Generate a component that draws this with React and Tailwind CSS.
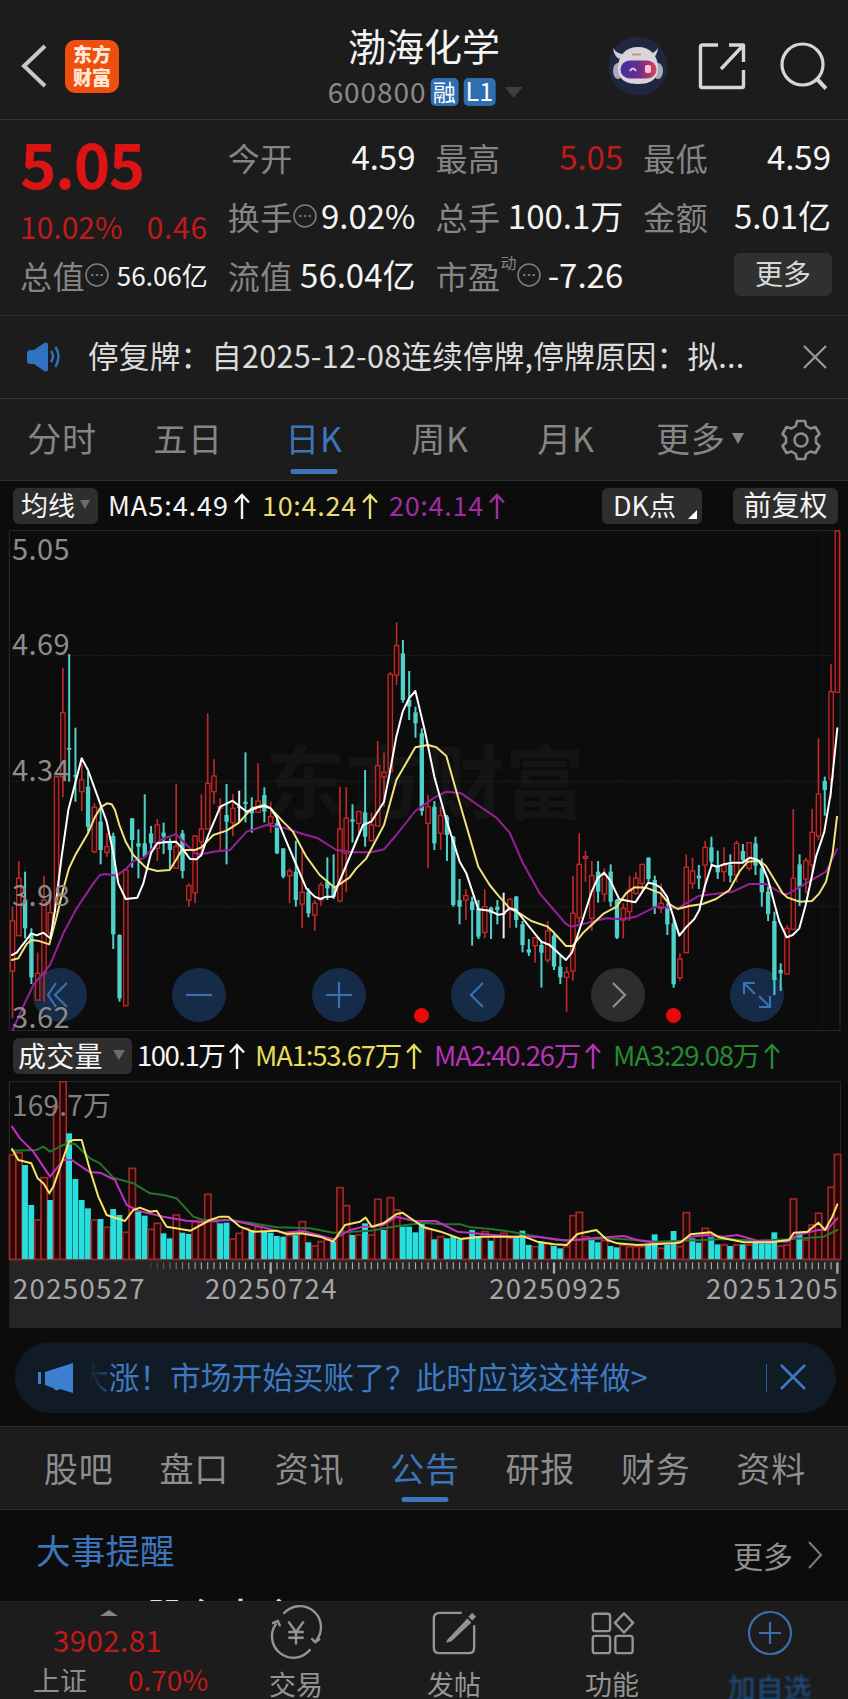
import React from 'react';

// [kind, high, bodyTop, bodyBottom, low], r = up, c = down, w = flat
const CANDLES = [
	['r', 1160, 1203, 1353, 1495], ['r', 1023, 1075, 1247, 1247], ['c', 1055, 1140, 1225, 1255], ['c', 1225, 1240, 1372, 1392],
	['r', 1298, 1360, 1440, 1440], ['r', 1067, 1140, 1360, 1445], ['r', 1125, 1178, 1240, 1250], ['r', 770, 770, 1175, 1175],
	['r', 443, 578, 770, 832], ['c', 402, 684, 689, 785], ['c', 623, 765, 770, 845], ['r', 730, 780, 815, 873],
	['c', 755, 800, 920, 935], ['r', 850, 862, 995, 1000], ['c', 865, 905, 990, 1033], ['r', 940, 980, 997, 1010],
	['c', 938, 948, 1243, 1287], ['c', 1243, 1245, 1435, 1445], ['r', 1050, 1050, 1457, 1457], ['c', 895, 895, 960, 1043],
	['c', 928, 970, 980, 1075], ['c', 823, 970, 1010, 1010], ['c', 918, 940, 970, 1005], ['r', 898, 915, 985, 1022],
	['c', 908, 938, 950, 1002], ['c', 955, 965, 990, 1048], ['r', 792, 980, 1045, 1045], ['c', 930, 940, 1053, 1075],
	['r', 1090, 1097, 1140, 1160], ['r', 945, 948, 1118, 1150], ['r', 823, 927, 965, 1010], ['r', 580, 790, 927, 927],
	['r', 718, 768, 815, 853], ['r', 835, 860, 865, 995], ['c', 792, 885, 905, 1033], ['r', 823, 865, 908, 948],
	['w', 812, 860, 863, 907], ['c', 697, 845, 852, 907], ['c', 832, 865, 880, 938], ['r', 730, 843, 877, 877],
	['c', 802, 825, 875, 907], ['r', 845, 890, 910, 938], ['c', 895, 910, 1000, 1002], ['c', 985, 985, 1070, 1075],
	['r', 1045, 1053, 1067, 1150], ['c', 962, 1055, 1140, 1160], ['r', 992, 1117, 1152, 1225], ['c', 1105, 1115, 1180, 1192],
	['r', 1140, 1150, 1185, 1233], ['r', 1087, 1095, 1140, 1158], ['c', 1012, 1085, 1105, 1140], ['c', 1003, 1100, 1130, 1137],
	['r', 800, 927, 1143, 1147], ['r', 802, 895, 1000, 1117], ['c', 853, 898, 905, 968], ['r', 873, 875, 910, 948],
	['c', 750, 877, 950, 980], ['r', 878, 915, 962, 962], ['r', 663, 737, 918, 918], ['r', 698, 757, 770, 860],
	['r', 455, 463, 755, 760], ['r', 307, 377, 465, 495], ['c', 360, 400, 540, 548], ['c', 453, 540, 560, 600],
	['c', 560, 577, 610, 653], ['c', 625, 640, 873, 887], ['r', 825, 860, 910, 1045], ['c', 843, 860, 970, 990],
	['r', 860, 887, 940, 990], ['c', 885, 890, 945, 1023], ['c', 948, 950, 1155, 1160], ['c', 1077, 1140, 1160, 1213],
	['r', 1108, 1127, 1140, 1200], ['c', 1130, 1145, 1170, 1277], ['c', 1140, 1165, 1250, 1257], ['r', 1108, 1160, 1237, 1255],
	['c', 1160, 1163, 1180, 1257], ['c', 1140, 1160, 1170, 1213], ['w', 1118, 1180, 1183, 1255], ['r', 1135, 1138, 1165, 1223],
	['c', 1128, 1130, 1200, 1223], ['c', 1203, 1213, 1275, 1297], ['c', 1257, 1288, 1298, 1308], ['r', 1253, 1253, 1277, 1328],
	['c', 1265, 1275, 1298, 1403], ['r', 1203, 1233, 1320, 1328], ['c', 1238, 1247, 1340, 1350], ['c', 1305, 1340, 1372, 1392],
	['r', 1340, 1357, 1372, 1475], ['r', 1067, 1180, 1353, 1382], ['r', 940, 1033, 1193, 1210], ['r', 993, 1010, 1015, 1085],
	['r', 1023, 1067, 1195, 1232], ['c', 1023, 1055, 1115, 1148], ['r', 1045, 1065, 1122, 1145], ['c', 1033, 1055, 1145, 1160],
	['c', 1137, 1140, 1253, 1257], ['r', 1150, 1165, 1200, 1255], ['r', 1067, 1110, 1175, 1202], ['r', 1057, 1075, 1120, 1125],
	['r', 1033, 1033, 1090, 1120], ['c', 1012, 1013, 1077, 1085], ['c', 1067, 1080, 1160, 1182], ['r', 1090, 1150, 1165, 1180],
	['c', 1150, 1163, 1213, 1245], ['c', 1190, 1210, 1393, 1403], ['r', 1300, 1317, 1373, 1382], ['r', 1003, 1042, 1298, 1298],
	['r', 1013, 1053, 1090, 1107], ['c', 1035, 1067, 1075, 1107], ['r', 962, 982, 1035, 1117], ['c', 950, 982, 1025, 1037],
	['c', 992, 1040, 1057, 1077], ['r', 982, 1037, 1055, 1085], ['c', 1003, 1035, 1067, 1087], ['r', 962, 970, 1065, 1087],
	['c', 972, 993, 1020, 1030], ['r', 967, 968, 1045, 1053], ['c', 950, 970, 1037, 1065], ['c', 1015, 1045, 1117, 1160],
	['c', 1100, 1115, 1182, 1203], ['c', 1175, 1203, 1380, 1425], ['c', 1330, 1350, 1360, 1413], ['r', 1215, 1225, 1362, 1362],
	['r', 867, 1075, 1228, 1230], ['c', 1003, 1033, 1100, 1158], ['r', 1013, 1022, 1077, 1120], ['r', 867, 937, 1035, 1075],
	['r', 655, 822, 948, 960], ['c', 770, 783, 810, 887], ['r', 433, 515, 777, 833], ['r', 33, 33, 517, 517],
];

// kind + top of the bar
const VOLUMES = 'r375 r368 c405 c525 r570 r443 c510 r230 r155 c310 c447 c510 c535 r570 c567 r592 c537 c555 r607 r415 c545 c557 r598 r580 c610 c625 r555 c608 c612 r575 r577 r493 r575 c580 c578 r627 r610 r595 c600 r590 c605 c608 c618 c620 r617 c615 r575 c637 r648 r635 r630 c635 r473 r527 c615 r615 c580 r615 r508 c600 r503 r540 c590 c590 c607 c575 r598 c628 r620 c625 c618 c628 r625 c600 c618 r605 c632 r620 r610 r625 c620 c602 c645 r650 c635 r640 c648 c655 r650 r557 r547 r620 c630 c637 r632 c648 c652 r645 r650 r650 r650 c645 c613 r655 c645 c603 r650 r548 c625 c638 r595 c622 c643 r645 c648 r645 c643 r645 c638 c640 c640 c607 r648 r645 r507 c610 r630 r585 r550 r600 r472 r373'
	.split(' ').map((s) => [s[0], Number(s.slice(1))]);

const MA5 = '36,1305 50,1298 94,1240 110,1246 130,1238 151,1255 165,1170 185,1010 205,870 245,715 264,750 320,905 340,1000 355,1090 377,1137 412,1133 430,1090 453,1000 472,970 491,967 528,965 547,985 570,1017 590,1018 604,1005 623,950 661,860 698,842 717,857 740,875 774,862 793,858 812,865 830,892 849,940 889,1035 919,1105 944,1130 961,1137 979,1130 1001,1130 1014,1095 1089,915 1114,905 1152,845 1169,760 1189,650 1208,575 1227,535 1246,513 1274,630 1303,770 1339,900 1379,1025 1399,1060 1435,1168 1469,1172 1494,1184 1509,1182 1529,1165 1548,1170 1586,1218 1624,1265 1649,1275 1698,1320 1716,1297 1738,1230 1775,1115 1793,1075 1812,1058 1831,1082 1858,1138 1906,1147 1945,1088 1963,1092 1982,1103 2001,1130 2038,1247 2058,1222 2083,1197 2098,1170 2114,1100 2135,1035 2152,1040 2171,1033 2198,1028 2228,1028 2250,1013 2273,1020 2288,1040 2303,1075 2338,1205 2360,1252 2378,1245 2398,1225 2417,1155 2448,1010 2473,935 2492,820 2512,625';
const MA10 = '36,1320 55,1315 80,1272 94,1260 113,1262 148,1273 170,1190 189,1110 207,1045 226,1005 264,940 283,895 302,862 321,850 335,853 345,870 358,915 377,965 400,1005 440,1045 472,1053 509,1050 528,1020 545,990 585,990 604,982 640,945 680,932 717,908 755,865 793,855 812,865 849,905 879,935 919,1010 959,1065 1004,1103 1049,1072 1069,1045 1099,1015 1152,915 1189,780 1246,682 1284,675 1309,682 1339,708 1378,845 1435,1040 1469,1095 1492,1123 1529,1165 1559,1180 1594,1203 1643,1220 1661,1237 1698,1278 1718,1278 1748,1240 1812,1180 1850,1160 1878,1120 1903,1102 1938,1103 1982,1120 2008,1152 2033,1167 2068,1158 2108,1152 2148,1137 2188,1110 2218,1055 2243,1025 2278,1022 2298,1038 2348,1120 2363,1133 2398,1145 2436,1143 2458,1120 2478,1085 2498,1000 2511,890';
const MA20 = '37,1533 60,1480 100,1395 150,1335 190,1240 230,1165 280,1090 300,1065 315,1062 350,1067 380,1045 400,1022 430,1015 480,960 528,942 560,975 585,1000 604,1003 640,995 690,990 740,935 800,915 849,923 909,942 954,955 1009,990 1059,997 1114,997 1152,988 1189,945 1246,873 1303,833 1339,815 1384,820 1429,852 1489,893 1529,938 1569,1030 1619,1120 1649,1155 1698,1212 1713,1220 1758,1210 1818,1195 1868,1198 1908,1190 1968,1160 2033,1165 2098,1127 2198,1115 2248,1092 2298,1092 2348,1122 2363,1122 2418,1090 2478,1055 2511,988';

const VMA1 = '36,357 55,390 94,400 113,445 132,462 148,490 160,470 207,335 220,330 245,330 270,420 295,500 320,555 375,573 400,540 420,533 450,545 470,542 500,590 572,602 630,570 660,560 685,560 720,590 760,605 830,602 860,612 905,610 960,620 1000,635 1035,585 1080,575 1097,563 1115,590 1150,580 1190,552 1207,548 1235,567 1272,592 1322,605 1382,627 1442,620 1512,620 1572,620 1612,635 1662,643 1700,645 1732,612 1789,600 1822,630 1852,640 1912,645 2022,640 2042,637 2072,613 2132,607 2157,622 2232,637 2312,637 2367,630 2382,608 2422,605 2455,578 2475,600 2497,560 2512,523';
const VMA2 = '36,290 60,325 100,365 150,440 190,390 215,390 270,427 300,428 345,450 380,525 415,542 490,560 560,572 610,575 690,570 750,583 800,595 850,608 910,603 1000,628 1050,600 1090,590 1115,590 1150,585 1190,560 1240,572 1307,573 1372,605 1422,610 1532,620 1612,620 1702,632 1772,625 1872,618 1912,630 1972,640 2032,640 2072,620 2122,615 2172,620 2212,615 2272,632 2362,635 2392,615 2455,600 2482,598 2512,565';
const VMA3 = '36,362 110,360 130,350 150,365 200,340 225,342 270,385 300,400 340,443 400,460 450,490 490,495 530,505 580,560 610,570 690,570 760,580 830,592 930,595 1000,608 1110,602 1180,590 1272,578 1322,583 1382,583 1412,592 1472,597 1532,605 1602,618 1672,630 1732,630 1832,625 1972,635 2052,632 2172,627 2272,632 2362,628 2472,620 2512,600';

const xOf = (i) => 37.5 + i * 18.89;

const Line = ({ points, color, w = 6 }) => (
	<polyline points={points} fill="none" stroke={color} strokeWidth={w} strokeLinejoin="round" strokeLinecap="round" />
);

const Dots = () => (
	<svg viewBox="0 0 24 24" className="w-6 h-6 shrink-0" fill="none" stroke="#7b7b7b" strokeWidth="1.6">
		<circle cx="12" cy="12" r="11" />
		<path d="M6.200 12h2.200M10.900 12h2.200M15.600 12h2.200" strokeWidth="2.200" />
	</svg>
);

const Header = () => (
	<header className="h-[120px] border-b border-[#333] flex items-center relative shrink-0">
		<svg viewBox="0 0 26 44" className="w-[26px] h-[44px] ml-[21px] mt-[13px]" fill="none" stroke="#c8c8c8" strokeWidth="4">
			<path d="M24 2 3 22l21 20" />
		</svg>
		<div className="ml-[18px] mt-[13px] w-[54px] h-[53px] rounded-[10px] bg-[#ee4f0e] text-[#ffe9d6] font-black text-[19px] leading-[23px] flex flex-col items-center justify-center pb-[2px]">
			<span>东方</span>
			<span>财富</span>
		</div>
		<div className="absolute left-1/2 -translate-x-1/2 top-[25px] flex flex-col items-center">
			<div className="text-[38px] leading-[40px] text-[#f4f4f4]">渤海化学</div>
			<div className="flex items-center mt-[13px] h-7 ml-[2px]">
				<span className="text-[28px] leading-7 tracking-[0.900px] text-[#8a8a8a] -mt-[3px]">600800</span>
				<span className="ml-[4px] w-7 h-7 rounded-[5px] bg-[#2f6eb0] text-white text-[23px] leading-[26px] text-center">融</span>
				<span className="ml-[5px] w-8 h-7 rounded-[5px] bg-[#2f6eb0] text-white text-[25px] leading-[25px] text-center">L1</span>
				<span className="ml-[9px] w-0 h-0 border-x-[9px] border-x-transparent border-t-[11px] border-t-[#3f3f3f]" />
			</div>
		</div>
		<div className="ml-auto mt-[13px] flex items-center">
			<svg viewBox="0 0 60 60" className="w-[60px] h-[60px]">
				<defs>
					<linearGradient id="visor" x1="0" x2="1">
						<stop offset="0" stopColor="#3f2f9c" />
						<stop offset=".5" stopColor="#6a2c8c" />
						<stop offset="1" stopColor="#dc4060" />
					</linearGradient>
				</defs>
				<circle cx="30" cy="30" r="29.500" fill="#20283f" />
				<path d="M5 12q1 8 6 11l5-5q-7 0-11-6zM50 12q-1 8-6 11l-5-5q7 0 11-6z" fill="#d0ccd4" />
				<ellipse cx="10" cy="35" rx="5" ry="8" fill="#aaa8ba" />
				<ellipse cx="50" cy="35" rx="5" ry="8" fill="#aaa8ba" />
				<path d="M30 11c12 0 20 8 20 21 0 12-8 16-20 16s-20-4-20-16c0-13 8-21 20-21z" fill="#d9d5da" />
				<path d="M24 18.500h9" stroke="#b89a80" strokeWidth="2" fill="none" />
				<rect x="12.500" y="24.500" width="36" height="18" rx="9" fill="url(#visor)" />
				<path d="M22 35q3-5 6 0" stroke="#d5c6ff" strokeWidth="2" fill="none" />
				<rect x="37" y="29" width="6" height="8" rx="2" fill="#ffc4cc" />
			</svg>
			<svg viewBox="0 0 48 48" className="w-[48px] h-[48px] ml-[30px]" fill="none" stroke="#d6d6d6" strokeWidth="3.400" strokeLinejoin="round">
				<path d="M20 3H4a1.500 1.500 0 0 0-1.500 1.500v39A1.500 1.500 0 0 0 4 45.500h40a1.500 1.500 0 0 0 1.500-1.500V28" />
				<path d="M31 3h14.500v17M45 3.500 23 27" />
			</svg>
			<svg viewBox="0 0 48 48" className="w-[48px] h-[48px] ml-[33px] mr-[21px]" fill="none" stroke="#d6d6d6" strokeWidth="3.200">
				<circle cx="23.500" cy="22.500" r="20.500" />
				<path d="m38 37 9 9.500" strokeWidth="4" />
			</svg>
		</div>
	</header>
);

const Cell = ({ label, value, dots, sup, red, small }) => (
	<div className="flex items-center justify-between h-[59px] leading-none whitespace-nowrap">
		<span className="flex items-center text-[#858585] text-[32px] tracking-[0.500px]">
			{label}
			{sup && <span className="text-[16px] self-start -mt-[5px]">{sup}</span>}
			{dots && <Dots />}
		</span>
		<span className={`${small ? 'text-[26px]' : 'text-[33px]'} ${red ? 'text-[#c01a1a]' : 'text-[#f4f4f4]'}`}>{value}</span>
	</div>
);

const Quote = () => (
	<section className="h-[196px] border-b border-[#2a2a2a] pl-5 pr-[17px] pt-[7px] grid grid-cols-4 gap-x-5 shrink-0">
		<div>
			<div className="h-[74px] text-[62px] leading-[70px] font-bold tracking-[-1.500px] text-[#dc1414]">5.05</div>
			<div className="h-[46px] flex items-center justify-between text-[30px] leading-none text-[#c01a1a] mt-[2px] mb-[-4px]">
				<span>10.02%</span>
				<span className="tracking-[0.700px]">0.46</span>
			</div>
			<Cell label="总值" dots small value="56.06亿" />
		</div>
		<div>
			<Cell label="今开" value="4.59" />
			<Cell label="换手" dots value="9.02%" />
			<Cell label="流值" value="56.04亿" />
		</div>
		<div>
			<Cell label="最高" value="5.05" red />
			<Cell label="总手" value="100.1万" />
			<Cell label="市盈" sup="动" dots value="-7.26" />
		</div>
		<div>
			<Cell label="最低" value="4.59" />
			<Cell label="金额" value="5.01亿" />
			<div className="h-[59px] flex items-center justify-end">
				<button className="w-[98px] h-[43px] -mr-px rounded-md bg-[#303030] text-[#d8d8d8] text-[28px] leading-none pb-[3px]">更多</button>
			</div>
		</div>
	</section>
);

const Notice = () => (
	<section className="h-[83px] border-b border-[#333] flex items-center shrink-0">
		<svg viewBox="0 0 36 30" className="w-[36px] h-[30px] ml-[26px]" fill="none" stroke="#2f74c0" strokeWidth="2.400">
			<path d="M1 11q0-3 4-3h3l11-7.500q3-.5 3 2v25q0 2.500-3 2L8 22H5q-4 0-4-3z" fill="#2f74c0" stroke="none" />
			<path d="M25 9q4 5 0 11M29.500 5q6 9 0 20" />
		</svg>
		<span className="ml-[26px] -mt-[3px] text-[30.600px] leading-none tracking-[0.220px] text-[#dcdcdc] whitespace-nowrap">停复牌：自2025-12-08连续停牌,停牌原因：拟...</span>
		<svg viewBox="0 0 24 24" className="w-6 h-6 ml-auto mr-[21px] -mt-px" stroke="#9a9a9a" strokeWidth="2.200">
			<path d="m1 1 22 22M23 1 1 23" />
		</svg>
	</section>
);

const PERIODS = ['分时', '五日', '日K', '周K', '月K'];

const PeriodTabs = () => (
	<nav className="h-[82px] border-b border-[#2e2e2e] flex pr-[26px] items-center text-[34px] leading-none tracking-[0.800px] text-[#858585] shrink-0">
		{PERIODS.map((p) => (
			<span key={p} className={`w-[126px] -left-px h-full pb-[3px] flex items-center justify-center relative ${p === '日K' ? 'text-[#3d75bb]' : ''}`}>
				{p}
				{p === '日K' && <i className="absolute bottom-[6px] left-1/2 -translate-x-1/2 w-[47px] h-[5px] rounded-full bg-[#3d75bb]" />}
			</span>
		))}
		<span className="flex items-center ml-[26px] pb-[3px]">
			更多
			<i className="ml-[6px] w-0 h-0 border-x-[6px] border-x-transparent border-t-[11px] border-t-[#858585]" />
		</span>
		<svg viewBox="0 0 42 42" className="w-[42px] h-[42px] ml-auto" fill="none" stroke="#8d8d8d" strokeWidth="2.600" strokeLinejoin="round">
			<path d="M17 2h8l1.200 5 4.300 2.500 5-1.500 4 7-3.500 3.500v5L39.500 27l-4 7-5-1.500-4.300 2.500L25 40h-8l-1.200-5-4.300-2.500-5 1.500-4-7L6 23.500v-5L2.500 15l4-7 5 1.500L15.800 7z" />
			<circle cx="21" cy="21" r="6.500" />
		</svg>
	</nav>
);

const PAN_ICONS = ['M23 15 15 27l8 12M34 15 22 27l12 12', 'M14 27h26', 'M14 27h26M27 14v26', 'M32 15 20 27l12 12', 'M22 15l12 12-12 12', 'M14 26V15h11M14 15l11 11M40 28v11H29M40 39 29 28'];

const PriceChart = () => (
	<div className="h-[501px] relative">
		<div className="absolute left-[265px] top-[207px] text-[80px] leading-none font-bold text-[#141414] whitespace-nowrap">东方财富</div>
		<div className="absolute left-[33px] right-[64px] top-[438px] flex justify-between">
			{PAN_ICONS.map((d, i) => (
				<span key={d} className={`w-[54px] h-[54px] rounded-full ${i === 4 ? 'bg-[#2d2d2d]' : 'bg-[#152b47]'}`}>
					<svg viewBox="0 0 54 54" fill="none" stroke={i === 4 ? '#8f8f8f' : '#3a70b4'} strokeWidth="2.200">
						<path d={d} />
					</svg>
				</span>
			))}
		</div>
		<svg viewBox="0 30 2544 1503" className="w-[848px] h-[501px] block relative">
			<path d="M28 32H2470V1532H28z" stroke="#2c2c2c" strokeWidth="3" fill="none" />
			<path d="M2470 32V1532" stroke="#0c0c0c" strokeWidth="3" />
			<path d="M2470 32h50V1532h-50" stroke="#2c2c2c" strokeWidth="3" fill="none" />
			<path d="M28 407H2520M28 784H2520M28 1160H2520" stroke="#2b2b2b" strokeWidth="3" strokeDasharray="3 4" />
			{CANDLES.map(([k, h, t, b, l], i) => {
				const x = xOf(i);
				if (k === 'r') {
					return (
						<g key={i} stroke="#bd2a2a" strokeWidth="4" fill="#220707">
							<path d={`M${x} ${h}V${t}M${x} ${b}V${l}`} strokeWidth="5" />
							<rect x={x - 6.5} y={t} width="13" height={b - t} />
						</g>
					);
				}
				const color = k === 'c' ? '#4fd1c9' : '#ececec';
				return (
					<g key={i} fill={color}>
						<rect x={x - 3} y={h} width="6" height={l - h} />
						<rect x={x - 6.5} y={t} width="13" height={b - t} />
					</g>
				);
			})}
			<Line points={MA20} color="#96209a" />
			<Line points={MA10} color="#f0e27c" />
			<Line points={MA5} color="#fff" />
		</svg>
		<div className="absolute inset-y-0 left-[12px] text-[29px] leading-none tracking-[0.400px] text-[#8c8c8c]">
			<span className="absolute top-[3px]">5.05</span>
			<span className="absolute top-[98px]">4.69</span>
			<span className="absolute top-[224px]">4.34</span>
			<span className="absolute top-[349px]">3.98</span>
			<span className="absolute top-[471px]">3.62</span>
		</div>
		<i className="absolute left-[414px] top-[478px] w-[15px] h-[15px] rounded-full bg-[#e60a0a]" />
		<i className="absolute left-[666px] top-[478px] w-[15px] h-[15px] rounded-full bg-[#e60a0a]" />
	</div>
);

const VolumeChart = () => (
	<div className="h-[247px] relative">
		<svg viewBox="0 153 2544 741" className="w-[848px] h-[247px] block">
			<path d="M28 690H2523V894H28z" fill="#252527" />
			<path d="M28 155H2521V690H28z" stroke="#2c2c2c" strokeWidth="3" fill="none" />
			{VOLUMES.map(([k, t], i) => (k === 'c'
				? <rect key={i} x={xOf(i) - 9} y={t} width="17.500" height={690 - t} fill="#27dfdc" />
				: <rect key={i} x={xOf(i) - 9} y={t} width="19" height={688 - t} fill="#2a0707" stroke="#9c2a2a" strokeWidth="5" />
			))}
			<path d="M28 689H2521" stroke="#8a2a2a" strokeWidth="3" />
			<Line points={VMA3} color="#23762c" />
			<Line points={VMA2} color="#c32fc0" />
			<Line points={VMA1} color="#f4e562" />
			{Array.from({ length: 110 }, (_, n) => n + 22).map((i) => {
				const major = i === 41 || i === 86 || i === 131;
				return <path key={i} d={`M${xOf(i)} 697v${major ? 34 : 21}`} stroke="#a8a8a8" strokeOpacity={Math.min(1, (i - 20) / 10)} strokeWidth={major ? 7 : 3.5} />;
			})}
		</svg>
		<span className="absolute left-[12px] top-[9px] text-[28px] leading-none tracking-[0.200px] text-[#808080]">169.7万</span>
		<div className="absolute top-[193px] left-[13px] right-[9px] flex text-[27.500px] leading-none tracking-[1.350px] text-[#a6a6a6]">
			<span>20250527</span>
			<span className="ml-[59px]">20250724</span>
			<span className="ml-auto mr-[84px]">20250925</span>
			<span>20251205</span>
		</div>
	</div>
);

const Arrow = () => (
	<svg viewBox="0 0 16 26" className="w-[16px] h-[26px] ml-[5px] shrink-0" fill="none" stroke="currentColor" strokeWidth="2.400">
		<path d="M8 26V2M1 9.500 8 2l7 7.500" />
	</svg>
);

const Chart = () => (
	<section className="bg-[#0c0c0c] shrink-0">
		<div className="h-[49px] flex items-center pl-[13px] pr-[10px] text-[27px] leading-none whitespace-nowrap text-[#f4f4f4]">
			<button className="w-[85px] h-[36px] rounded-md bg-[#2e2e2e] flex items-center justify-center pb-[2px]">
				均线
				<i className="ml-[5px] w-0 h-0 border-x-[5px] border-x-transparent border-t-[9px] border-t-[#6c6c6c]" />
			</button>
			<span className="ml-[10px] w-[154px] tracking-[0.950px] flex items-center"><span className="-mt-[2px]">MA5:4.49</span><Arrow /></span>
			<span className="w-[127px] tracking-[0.700px] text-[#e8dc78] flex items-center"><span className="-mt-[2px]">10:4.24</span><Arrow /></span>
			<span className="tracking-[0.700px] text-[#a02ca2] flex items-center"><span className="-mt-[2px]">20:4.14</span><Arrow /></span>
			<button className="ml-auto w-[100px] h-[36px] rounded-md bg-[#2e2e2e] pl-[11px] pb-[2px] flex items-center relative">
				DK点
				<i className="absolute right-[5px] bottom-[5px] w-0 h-0 border-l-[9px] border-l-transparent border-b-[9px] border-b-white" />
			</button>
			<button className="ml-[31px] w-[105px] h-[36px] rounded-md bg-[#2e2e2e] text-[28px] pb-[3px]">前复权</button>
		</div>
		<PriceChart />
		<div className="h-[50px] flex items-center pl-[13px] text-[27.500px] leading-none whitespace-nowrap text-[#f4f4f4] tracking-[-1.200px]">
			<button className="w-[119px] h-[36px] rounded-md bg-[#2e2e2e] pl-[5px] pb-[2px] flex items-center text-[28px] tracking-[0.200px] mr-[5px]">
				成交量
				<i className="ml-[10px] w-0 h-0 border-x-[6px] border-x-transparent border-t-[10px] border-t-[#6c6c6c]" />
			</button>
			<span className="w-[118px] flex items-center tracking-[-1.500px]"><span className="-mt-[2px]">100.1万</span><Arrow /></span>
			<span className="w-[179px] text-[#e8dc58] flex items-center"><span className="-mt-[2px]">MA1:53.67万</span><Arrow /></span>
			<span className="w-[179px] text-[#b832b6] flex items-center"><span className="-mt-[2px]">MA2:40.26万</span><Arrow /></span>
			<span className="text-[#268a30] flex items-center"><span className="-mt-[2px]">MA3:29.08万</span><Arrow /></span>
		</div>
		<VolumeChart />
	</section>
);

const Banner = () => (
	<section className="h-[98px] bg-[#0c0c0c] pt-[14px] pl-[15px] pr-[12px] shrink-0">
		<div className="h-[71px] rounded-full bg-[#111b26] flex items-center text-[#3f79c1]">
			<svg viewBox="0 0 36 32" className="w-[36px] h-[32px] ml-[23px]" fill="#3d7fd0">
				<path d="M0 10h3v12H0zM7 10 35 1v30l-13-4q-4 3-7-1l-8-3z" />
			</svg>
			<span className="ml-[4px] -mt-[3px] text-[30.700px] leading-none whitespace-nowrap">
				<span className="bg-linear-to-r from-transparent from-30% to-[#3f79c1]/50 bg-clip-text text-transparent">大</span>
				涨！市场开始买账了？此时应该这样做&gt;
			</span>
			<i className="ml-auto w-px h-[28px] bg-[#2d5c96]" />
			<svg viewBox="0 0 26 26" className="w-[26px] h-[26px] ml-[13px] mr-[30px] -mt-px" stroke="#3f79c1" strokeWidth="2.600">
				<path d="m1 1 24 24M25 1 1 25" />
			</svg>
		</div>
	</section>
);

const SECTIONS = ['股吧', '盘口', '资讯', '公告', '研报', '财务', '资料'];

const SectionTabs = () => (
	<nav className="h-[84px] border-y border-[#2a2a2a] flex justify-between items-center pl-[44px] pr-[42px] text-[34px] tracking-[0.800px] leading-none text-[#8e8e8e] shrink-0">
		{SECTIONS.map((s) => (
			<span key={s} className={`h-full pb-px flex items-center relative ${s === '公告' ? 'text-[#3d75bb]' : ''}`}>
				{s}
				{s === '公告' && <i className="absolute bottom-[7px] left-1/2 -translate-x-1/2 w-[47px] h-[5px] rounded-full bg-[#3d75bb]" />}
			</span>
		))}
	</nav>
);

const Events = () => (
	<section className="h-[91px] bg-[#0c0c0c] overflow-hidden shrink-0">
		<div className="h-[82px] flex items-center pl-[36px] pr-[25px] leading-none">
			<span className="text-[34.500px] tracking-[0.200px] text-[#3d75bb] -mt-[4px]">大事提醒</span>
			<span className="ml-auto mt-[7px] text-[30px] text-[#8e8e8e]">更多</span>
			<svg viewBox="0 0 16 28" className="w-[16px] h-[28px] ml-[14px] mt-[8px]" fill="none" stroke="#7d7d7d" strokeWidth="2">
				<path d="m2 1 12 13L2 27" />
			</svg>
		</div>
		<div className="pl-[147px] mt-[5px] text-[37px] leading-none font-medium tracking-[0.500px] text-[#e2e2e2] whitespace-nowrap">股东大会</div>
	</section>
);

const ACTIONS = [
	{
		label: '交易',
		icon: (
			<>
				<path d="M12 5A21.500 21.500 0 0 1 46 33M40 42A21.500 21.500 0 0 1 4.500 15M0 15l6-2.500 2.500 5.500M50 31l-5 3.500-4-4" />
				<path d="m17 13 8 11 8-11M25 24v13M17 24h16M17 30h16" />
			</>
		),
	},
	{
		label: '发帖',
		icon: (
			<>
				<path d="M33 4H10q-6 0-6 6v30q0 6 6 6h30q6 0 6-6V17" />
				<path d="m19 32 20-21 3 3-20 19-4 1z M41 8l3-3 3 3-3 3z" fill="#949494" strokeWidth="1.500" />
			</>
		),
	},
	{
		label: '功能',
		icon: (
			<>
				<rect x="5" y="5" width="18" height="18" rx="2.500" />
				<rect x="5" y="28" width="18" height="18" rx="2.500" />
				<rect x="28.500" y="28" width="18" height="18" rx="2.500" />
				<path d="m37.500 4.500 9.500 10-9.500 10-9.500-10z" strokeLinejoin="round" />
			</>
		),
	},
];

const BottomBar = () => (
	<footer className="h-[98px] border-t border-[#222] grid grid-cols-[217px_158px_158px_158px_157px] overflow-hidden leading-none shrink-0">
		<div className="relative pt-[23px] pl-[33px]">
			<i className="absolute left-[100px] top-[8px] w-0 h-0 border-x-[9px] border-x-transparent border-b-[6px] border-b-[#858585]" />
			<div className="pl-[20px] text-[29.500px] tracking-[0.400px] h-[29px] text-[#c01a1a]">3902.81</div>
			<div className="mt-[11px] flex items-center text-[27px] text-[#8e8e8e]">
				上证
				<span className="ml-[41px] text-[28px] text-[#c01a1a]">0.70%</span>
			</div>
		</div>
		{ACTIONS.map((a) => (
			<div key={a.label} className="flex flex-col items-center pt-[7px] text-[27px] text-[#949494]">
				<svg viewBox="0 0 50 50" className="w-[48px] h-[48px] overflow-visible" fill="none" stroke="#949494" strokeWidth="2.500">{a.icon}</svg>
				<span className="mt-[13px]">{a.label}</span>
			</div>
		))}
		<div className="flex flex-col items-center pt-[8px] text-[28px] text-[#1f5590]">
			<svg viewBox="0 0 46 46" className="w-[46px] h-[46px]" fill="none" stroke="#3b6fae" strokeWidth="2.200">
				<circle cx="23" cy="23" r="21" />
				<path d="M12 23h22M23 12v22" />
			</svg>
			<span className="mt-[17px] blur-[1px]">加自选</span>
		</div>
	</footer>
);

export default function App() {
	return (
		<div className="w-[848px] h-[1699px] overflow-hidden flex flex-col bg-[#1c1c1c] font-['Noto_Sans_CJK_SC',sans-serif]">
			<Header />
			<Quote />
			<Notice />
			<PeriodTabs />
			<Chart />
			<Banner />
			<SectionTabs />
			<Events />
			<BottomBar />
		</div>
	);
}
